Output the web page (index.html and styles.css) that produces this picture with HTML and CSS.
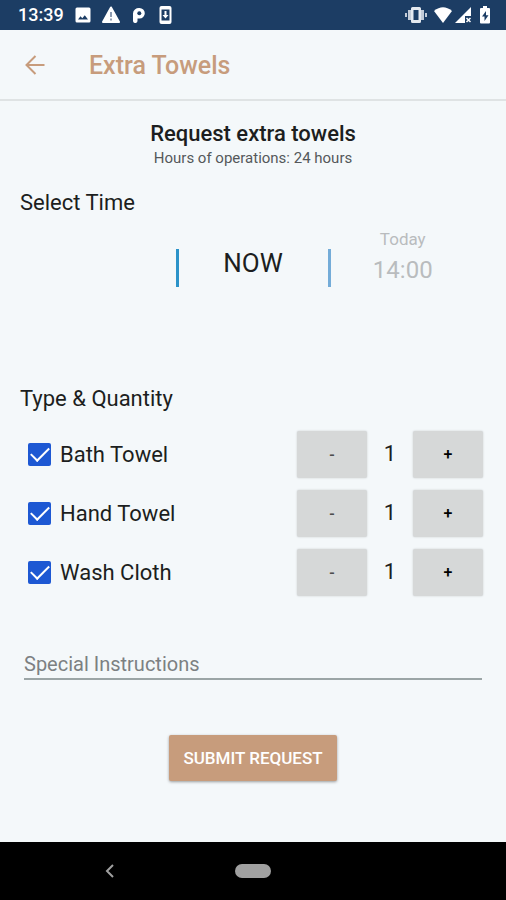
FILE: index.html
```html
<!DOCTYPE html>
<html lang="en">
<head>
<meta charset="utf-8">
<meta name="viewport" content="width=device-width, initial-scale=1">
<title>Extra Towels</title>
<link rel="stylesheet" href="styles.css">
</head>
<body>
<div class="status">
  <div class="status-left">
    <span class="clock">13:39</span>
    <svg class="ic-image" width="16" height="16" viewBox="0 0 16 16" aria-hidden="true"><path fill="#fff" fill-rule="evenodd" d="M2 .5h12a1.500 1.500 0 0 1 1.500 1.500v12a1.500 1.500 0 0 1-1.500 1.500H2A1.500 1.500 0 0 1 .5 14V2A1.500 1.500 0 0 1 2 .5zM3 12.500h10L9.800 8.200 7.300 11.300 5.500 9.200z"/></svg>
    <svg class="ic-warning" width="18" height="18" viewBox="1 0 18 18" aria-hidden="true"><path fill="#fff" stroke="#fff" stroke-width="2" stroke-linejoin="round" d="M10 1.500 18 16H2z"/><path fill="#8d9bb0" d="M9 6h2v5H9zM9 12.500h2v2H9z"/></svg>
    <svg class="ic-p" width="17" height="16" viewBox="-1 0 17 16" aria-hidden="true"><path fill="#fff" d="M1 6.500A6 5.500 0 0 1 7.500 1a5.300 5.300 0 0 1 0 10.600H5.500V14A2.200 2 0 0 1 1 14z"/><circle cx="7.300" cy="6.200" r="2" fill="#1c3d64"/></svg>
    <svg class="ic-update" width="14" height="18" viewBox="0 0 14 18" aria-hidden="true"><rect x=".5" y="0" width="12" height="18" rx="2" fill="#fff"/><path fill="#1c3d64" d="M2.500 3.500h8v11h-8z"/><path fill="#fff" d="M5.500 5h2v4H9.500l-3 3.500-3-3.500h2z"/></svg>
  </div>
  <div class="status-right">
    <svg class="ic-vibrate" width="22" height="16" viewBox="0 0 22 16" aria-hidden="true"><path fill="#e4e9ef" fill-rule="evenodd" d="M7.500 0h7A1.500 1.500 0 0 1 16 1.500v13a1.500 1.500 0 0 1-1.500 1.500h-7A1.500 1.500 0 0 1 6 14.500v-13A1.500 1.500 0 0 1 7.500 0zM8.500 3v10h5V3z"/><path fill="#c3ccd8" d="M3 3h3v10H3zM16 3h3v10h-3zM0 6h2v4H0zM20 6h2v4h-2z"/></svg>
    <svg class="ic-wifi" width="18" height="16" viewBox="0 0 20 16" preserveAspectRatio="none" aria-hidden="true"><path fill="#fff" d="M0 4Q10-3.500 20 4L10 16z"/></svg>
    <svg class="ic-signal" width="16" height="16" viewBox="0 0 16 16" aria-hidden="true"><path fill="#fff" d="M16 0v9h-6v7H0z"/><path stroke="#fff" stroke-width="1.500" d="m11.500 11 4 4m0-4-4 4"/></svg>
    <svg class="ic-battery" width="12" height="18" viewBox="0 0 12 18" aria-hidden="true"><path fill="#fff" d="M4 0h4v2h2a1 1 0 0 1 1 1v13.500a1 1 0 0 1-1 1H2a1 1 0 0 1-1-1V3a1 1 0 0 1 1-1h2z"/><path fill="#1c3d64" d="M7 5 3 10.500h2.500V15l4-5.800H7z"/></svg>
  </div>
</div>

<header class="appbar">
  <button class="back" type="button" aria-label="Back">
    <svg width="20" height="20" viewBox="0 0 20 20" aria-hidden="true"><path fill="none" stroke="#c79c7c" stroke-width="2" d="M19.500 10H2M10.500 1 1.500 10l9 9"/></svg>
  </button>
  <h1>Extra Towels</h1>
</header>

<main>
  <section class="intro">
    <h2>Request extra towels</h2>
    <p>Hours of operations: 24 hours</p>
  </section>

  <h3>Select Time</h3>
  <div class="picker">
    <button class="slot now" type="button">NOW</button>
    <button class="slot later" type="button"><span class="day">Today</span><span class="hour">14:00</span></button>
  </div>

  <h3>Type &amp; Quantity</h3>
  <ul class="items">
    <li>
      <label><input type="checkbox" checked>Bath Towel</label>
      <button class="step minus" type="button" aria-label="Fewer bath towels">-</button>
      <output>1</output>
      <button class="step" type="button" aria-label="More bath towels">+</button>
    </li>
    <li>
      <label><input type="checkbox" checked>Hand Towel</label>
      <button class="step minus" type="button" aria-label="Fewer hand towels">-</button>
      <output>1</output>
      <button class="step" type="button" aria-label="More hand towels">+</button>
    </li>
    <li>
      <label><input type="checkbox" checked>Wash Cloth</label>
      <button class="step minus" type="button" aria-label="Fewer wash cloths">-</button>
      <output>1</output>
      <button class="step" type="button" aria-label="More wash cloths">+</button>
    </li>
  </ul>

  <input class="notes" type="text" placeholder="Special Instructions" aria-label="Special Instructions">
  <button class="submit" type="submit">SUBMIT REQUEST</button>
</main>

<nav class="navbar">
  <button class="nav-back" type="button" aria-label="System back">
    <svg width="10" height="14" viewBox="0 0 10 14" aria-hidden="true"><path fill="none" stroke="#a0a0a0" stroke-width="2" d="M8 1 2 7l6 6"/></svg>
  </button>
  <button class="nav-home" type="button" aria-label="Home"></button>
</nav>
</body>
</html>
```
FILE: styles.css
```css
* {
  box-sizing: border-box;
}

body {
  display: flex;
  flex-direction: column;
  min-height: 100vh;
  margin: 0;
  background: #f4f8fa;
  color: #1c1e20;
  font-family: Roboto, "Liberation Sans", sans-serif;
}

h1, h2, h3, p, ul {
  margin: 0;
  padding: 0;
}

button {
  padding: 0;
  border: 0;
  background: none;
  color: inherit;
  font-family: inherit;
}

svg {
  display: block;
}

.status {
  display: flex;
  align-items: center;
  justify-content: space-between;
  height: 30px;
  padding: 0 15px 0 18px;
  background: #1c3d64;
  color: #fff;
}

.status-left,
.status-right {
  display: flex;
  align-items: center;
}

.status-left {
  gap: 11px;
}

.status-right {
  gap: 3px;
}

.ic-vibrate {
  margin-right: 4px;
}

.ic-battery {
  margin-left: 5px;
}

.clock {
  font-size: 18px;
  font-weight: 500;
  line-height: 30px;
}

.appbar {
  display: flex;
  align-items: center;
  gap: 44px;
  height: 71px;
  padding: 0 25px;
  border-bottom: 2px solid #dfe3e4;
  color: #c79c7c;
}

.appbar h1 {
  padding-top: 2px;
  font-size: 25px;
  font-weight: 500;
  line-height: 32px;
}

main {
  display: flex;
  flex: 1;
  flex-direction: column;
  padding: 19px 20px 60px;
}

.intro {
  text-align: center;
}

.intro h2 {
  font-size: 22px;
  font-weight: 500;
  line-height: 28px;
}

.intro p {
  color: #55585a;
  font-size: 15px;
  line-height: 20px;
}

h3 {
  font-size: 22px;
  font-weight: 400;
  line-height: 28px;
}

.intro + h3 {
  margin-top: 21px;
}

.picker {
  display: grid;
  grid-template-columns: 1fr 155px 1fr;
  height: 168px;
  margin: 0 -20px;
  padding-top: 10px;
}

.slot {
  display: flex;
  flex-direction: column;
  align-items: center;
}

.now {
  grid-column: 2;
  height: 38px;
  margin-top: 22px;
  border-right: 3px solid #74acd8;
  border-left: 3px solid #2b93c9;
  font-size: 26px;
  line-height: 28px;
}

.later {
  height: 60px;
  padding-right: 31px;
  color: #b9bcbe;
}

.day {
  font-size: 17px;
  line-height: 24px;
}

.hour {
  font-size: 24px;
  line-height: 38px;
}

.items {
  display: grid;
  gap: 12px;
  margin-top: 18px;
  list-style: none;
}

.items li {
  display: grid;
  grid-template-columns: 1fr 70px 46px 70px;
  align-items: center;
  height: 47px;
  padding-right: 3px;
}

.items label {
  display: flex;
  align-items: center;
  gap: 9px;
  padding-left: 8px;
  font-size: 22px;
  line-height: 28px;
}

.items input {
  display: grid;
  place-items: center;
  width: 23px;
  height: 23px;
  margin: 0;
  border-radius: 2px;
  background: #1d58d3;
  appearance: none;
}

.items input:checked::after {
  width: 16px;
  height: 8px;
  margin-bottom: 6px;
  border: solid #fff;
  border-width: 0 0 2px 2px;
  content: "";
  transform: rotate(-45deg);
}

.step {
  height: 47px;
  border-radius: 2px;
  background: #d6d8d8;
  box-shadow: 0 0 2px #c4c8c9;
  color: #000;
  font-size: 16px;
  font-weight: 500;
}

.minus {
  color: #4c4e4e;
}

.items output {
  padding-bottom: 2px;
  font-size: 22px;
  line-height: 26px;
  text-align: center;
}

.notes {
  height: 32px;
  margin: 52px 4px 0;
  padding: 2px 0 0;
  border: 0;
  border-bottom: 2px solid #9ba5a6;
  border-radius: 0;
  background: none;
  color: inherit;
  font-family: inherit;
  font-size: 20px;
}

.notes::placeholder {
  color: #7c8082;
  opacity: 1;
}

.submit {
  align-self: center;
  height: 46px;
  margin-top: 55px;
  padding: 0 14px;
  border-radius: 2px;
  background: #c79c7c;
  box-shadow: 0 1px 3px #9a9c9d;
  color: #fff;
  font-size: 17px;
  font-weight: 500;
}

.navbar {
  display: grid;
  grid-template-columns: 1fr 36px 1fr;
  align-items: center;
  height: 58px;
  background: #000;
}

.nav-back {
  justify-self: center;
  padding-right: 16px;
}

.nav-home {
  height: 14px;
  border-radius: 7px;
  background: #a0a0a0;
}
```
